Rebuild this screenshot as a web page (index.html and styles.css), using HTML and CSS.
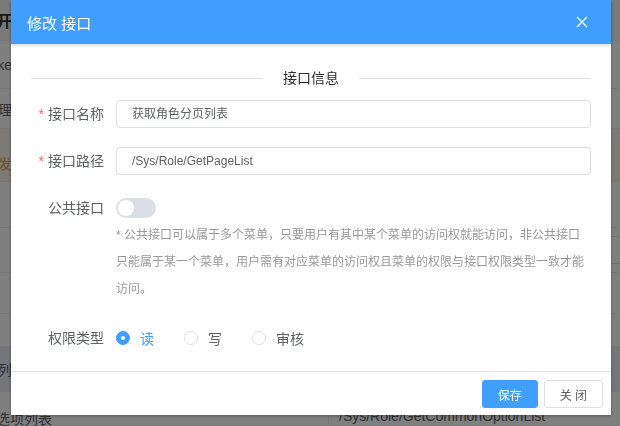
FILE: index.html
```html
<!DOCTYPE html>
<html lang="zh">
<head>
<meta charset="utf-8">
<title>修改 接口</title>
<link rel="stylesheet" href="styles.css">
</head>
<body>
<div class="page">
  <div class="row row-head"><div class="cell-l">开</div><div class="cell-r"></div></div>
  <div class="row row-a"><div class="cell-l">ke</div><div class="cell-r"></div></div>
  <div class="row row-b"><div class="cell-l">理</div><div class="cell-r"></div></div>
  <div class="row row-warn"><div class="cell-l warn">发</div><div class="cell-r"></div></div>
  <div class="row row-c"><div class="cell-l"></div><div class="cell-r"></div></div>
  <div class="row row-d"><div class="cell-l"></div><div class="cell-r"><span class="bg-btn"></span></div></div>
  <div class="row row-e"><div class="cell-l"></div><div class="cell-r"></div></div>
  <div class="row row-f"><div class="cell-l"></div><div class="cell-r"></div></div>
  <div class="row row-hover"><div class="cell-l">页列</div><div class="cell-r"></div></div>
  <div class="row row-last"><div class="cell-l wide">获取公共选项列表</div><div class="cell-mid">/Sys/Role/GetCommonOptionList</div></div>
</div>
<div class="mask"></div>
<div class="dialog">
  <div class="dialog-header">
    <span class="dialog-title">修改 接口</span>
    <svg class="close" width="12" height="12" viewBox="0 0 12 12"><path d="M1 1 L11 11 M11 1 L1 11" stroke="#fff" stroke-width="1.3" fill="none"/></svg>
  </div>
  <div class="dialog-body">
    <div class="divider"><span class="divider-line"></span><span class="divider-text">接口信息</span><span class="divider-line"></span></div>
    <div class="form-item">
      <label class="form-label"><span class="req">*</span>接口名称</label>
      <div class="form-content"><div class="input">获取角色分页列表</div></div>
    </div>
    <div class="form-item">
      <label class="form-label"><span class="req">*</span>接口路径</label>
      <div class="form-content"><div class="input">/Sys/Role/GetPageList</div></div>
    </div>
    <div class="form-item">
      <label class="form-label">公共接口</label>
      <div class="form-content">
        <div class="switch-line"><span class="switch"><span class="knob"></span></span></div>
        <div class="hint">* 公共接口可以属于多个菜单，只要用户有其中某个菜单的访问权就能访问，非公共接口只能属于某一个菜单，用户需有对应菜单的访问权且菜单的权限与接口权限类型一致才能访问。</div>
      </div>
    </div>
    <div class="form-item">
      <label class="form-label">权限类型</label>
      <div class="form-content radios">
        <span class="radio checked"><span class="radio-dot"></span><span class="radio-label">读</span></span>
        <span class="radio"><span class="radio-dot"></span><span class="radio-label">写</span></span>
        <span class="radio"><span class="radio-dot"></span><span class="radio-label">审核</span></span>
      </div>
    </div>
  </div>
  <div class="dialog-footer">
    <button class="btn btn-primary">保存</button>
    <button class="btn">关 闭</button>
  </div>
</div>
</body>
</html>
```
FILE: styles.css
```css
html, body {
  margin: 0;
  padding: 0;
  width: 620px;
  height: 426px;
  overflow: hidden;
  font-family: "Liberation Sans", "Noto Sans CJK SC", sans-serif;
  background: #fff;
}

.page {
  display: flex;
  flex-direction: column;
  width: 620px;
}
.row {
  display: flex;
  border-bottom: 1px solid #ebeef5;
  font-size: 14px;
  color: #606266;
}
.cell-l {
  width: 12px;
  overflow: hidden;
  display: flex;
  justify-content: flex-end;
  white-space: nowrap;
  align-items: center;
}
.cell-l.wide { width: 52px; }
.cell-r { flex: 1; display: flex; justify-content: flex-end; align-items: center; padding-right: 0; }
.cell-mid {
  margin-left: 276px;
  border-left: 1px solid #ebeef5;
  padding-left: 10px;
  display: flex;
  align-items: center;
}
.row-head { height: 40px; color: #303133; font-weight: bold; font-size: 16px; background: #f5f5f5; }
.row-a { height: 47px; }
.row-b { height: 39px; }
.row-warn { height: 52px; background: #fbf3e8; }
.row-warn .cell-l { align-items: flex-end; padding-bottom: 8px; }
.warn { color: #e6a23c; }
.row-c { height: 45px; }
.row-d { height: 44px; }
.bg-btn { width: 12px; height: 26px; border: 1px solid #dcdfe6; border-right: none; border-radius: 3px 0 0 3px; }
.row-e { height: 40px; }
.row-f { height: 32px; }
.row-hover { height: 44px; background: #e9edf2; }
.row-last { height: 60px; align-items: flex-start; padding-top: 16px; }

.mask {
  position: fixed;
  inset: 0;
  background: rgba(0, 0, 0, 0.5);
}

.dialog {
  position: absolute;
  left: 11px;
  top: 0;
  width: 600px;
  background: #fff;
  box-shadow: 0 1px 3px rgba(0, 0, 0, 0.3);
}
.dialog-header {
  height: 44px;
  background: #409eff;
  display: flex;
  align-items: center;
  justify-content: space-between;
  padding: 0 23px 0 16px;
  box-shadow: 0 2px 3px rgba(0, 0, 0, 0.12);
  position: relative;
}
.dialog-title {
  color: #fff;
  font-size: 15px;
}
.close { display: block; }

.dialog-body {
  padding: 24px 20px 0 20px;
}
.divider {
  display: flex;
  align-items: center;
  height: 20px;
  margin-bottom: 12px;
}
.divider-line {
  flex: 1;
  height: 1px;
  background: #dcdfe6;
}
.divider-text {
  padding: 0 20px;
  font-size: 14px;
  color: #303133;
  line-height: 20px;
}

.form-item {
  display: flex;
  margin-bottom: 19px;
}
.form-label {
  width: 85px;
  box-sizing: border-box;
  padding-right: 12px;
  text-align: right;
  font-size: 14px;
  line-height: 28px;
  color: #606266;
  flex: none;
}
.req {
  color: #f56c6c;
  margin-right: 4px;
}
.form-content {
  flex: 1;
  min-width: 0;
}
.input {
  height: 28px;
  box-sizing: border-box;
  border: 1px solid #dcdfe6;
  border-radius: 4px;
  padding: 0 15px;
  font-size: 12px;
  line-height: 26px;
  color: #606266;
}
.switch-line {
  height: 28px;
  display: flex;
  align-items: center;
}
.switch {
  width: 40px;
  height: 20px;
  border-radius: 10px;
  background: #dcdfe6;
  position: relative;
  display: inline-block;
}
.knob {
  position: absolute;
  left: 2px;
  top: 2px;
  width: 16px;
  height: 16px;
  border-radius: 50%;
  background: #fff;
}
.hint {
  font-size: 12px;
  line-height: 27px;
  padding-bottom: 2px;
  color: #999;
}

.radios {
  display: flex;
  align-items: center;
  height: 28px;
}
.radio {
  display: flex;
  align-items: center;
  margin-right: 30px;
  font-size: 14px;
  color: #606266;
}
.radio-dot {
  width: 14px;
  height: 14px;
  box-sizing: border-box;
  border: 1px solid #dcdfe6;
  border-radius: 50%;
  background: #fff;
  position: relative;
}
.radio.checked .radio-dot {
  background: #409eff;
  border-color: #409eff;
}
.radio.checked .radio-dot::after {
  content: "";
  position: absolute;
  left: 4px;
  top: 4px;
  width: 4px;
  height: 4px;
  border-radius: 50%;
  background: #fff;
}
.radio.checked .radio-label { color: #409eff; }
.radio-label { padding-left: 10px; }

.dialog-footer {
  border-top: 1px solid #e4e7ed;
  padding: 8px 8px 7px 9px;
  display: flex;
  justify-content: flex-end;
  gap: 6px;
}
.btn {
  height: 28px;
  padding: 0 15px;
  font-size: 12px;
  font-family: inherit;
  border: 1px solid #dcdfe6;
  border-radius: 3px;
  background: #fff;
  color: #606266;
}
.btn-primary {
  background: #409eff;
  border-color: #409eff;
  color: #fff;
}
```
